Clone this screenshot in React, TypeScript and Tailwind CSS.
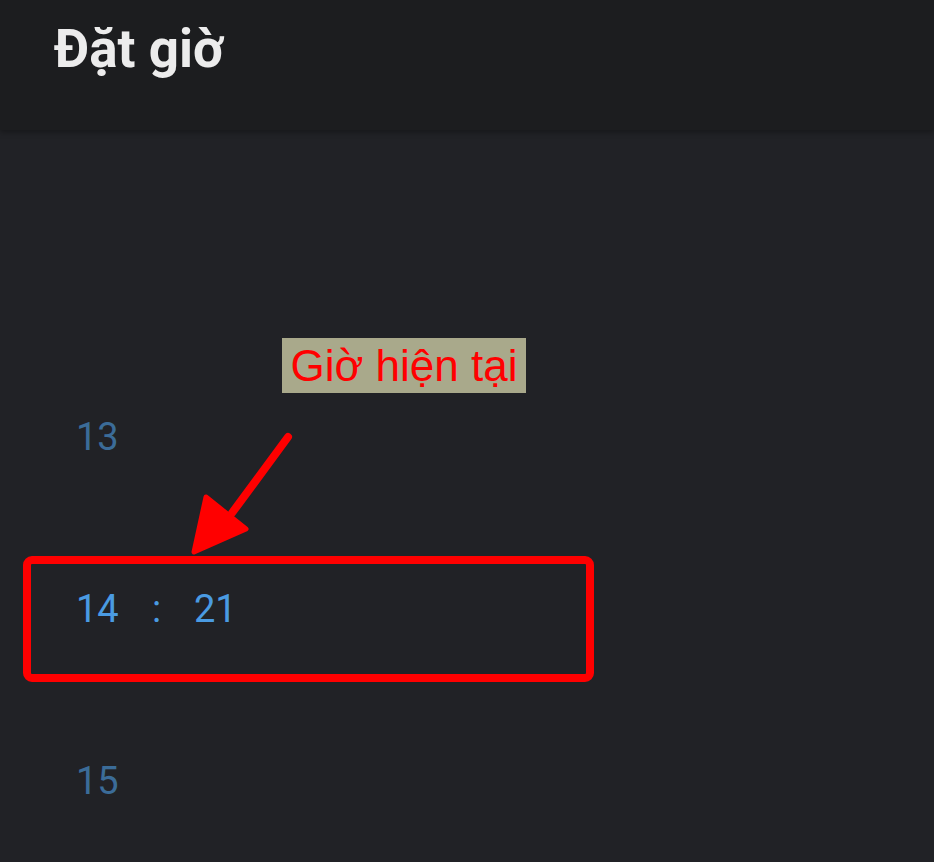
import React from 'react';

// Hour wheel rows shown under the header
const rows = [
  { hour: '13', active: false },
  { hour: '14', minute: '21', active: true },
  { hour: '15', active: false },
];

const ArrowMark = () => (
  <svg width="120" height="135" viewBox="0 0 120 135" className="absolute left-[180px] top-[425px]" aria-hidden="true">
    <line x1="108" y1="12" x2="52" y2="88" stroke="#ff0000" strokeWidth="8" strokeLinecap="round" />
    <polygon points="26,72 66,104 14,127" fill="#ff0000" stroke="#ff0000" strokeWidth="5" strokeLinejoin="round" />
  </svg>
);

export default function App() {
  return (
    <div className="relative w-[934px] h-[862px] overflow-hidden bg-[#212226] font-['Roboto','Noto_Sans',sans-serif]">
      {/* Header */}
      <header className="relative z-10 h-[130px] bg-[#1c1d1f] shadow-[0_2px_6px_rgba(0,0,0,0.35)] px-[54px] pt-[14px]">
        <h1 className="text-[53px] leading-[70px] font-bold text-[#ececec]">Đặt giờ</h1>
      </header>

      {/* Time wheel */}
      <div className="flex flex-col pt-[221px]">
        {rows.map((r) => (
          <div key={r.hour} className="h-[172px] flex items-center pl-[76px]">
            {r.active ? (
              <div className="flex items-center text-[38px] text-[#4a9be2]">
                <span className="w-[76px]">{r.hour}</span>
                <span className="w-[42px]">:</span>
                <span>{r.minute}</span>
              </div>
            ) : (
              <span className="text-[38px] text-[#3b6c98]">{r.hour}</span>
            )}
          </div>
        ))}
      </div>

      {/* Annotation overlay */}
      <div className="absolute left-[282px] top-[338px] h-[55px] w-[244px] bg-[#a9a98b] flex items-center justify-center">
        <span className="text-[44px] leading-none text-[#ff0000] font-['Liberation_Sans',sans-serif]">Giờ hiện tại</span>
      </div>
      <ArrowMark />
      <div className="absolute left-[23px] top-[556px] w-[571px] h-[126px] border-[8px] border-[#ff0000] rounded-[9px]" />
    </div>
  );
}
